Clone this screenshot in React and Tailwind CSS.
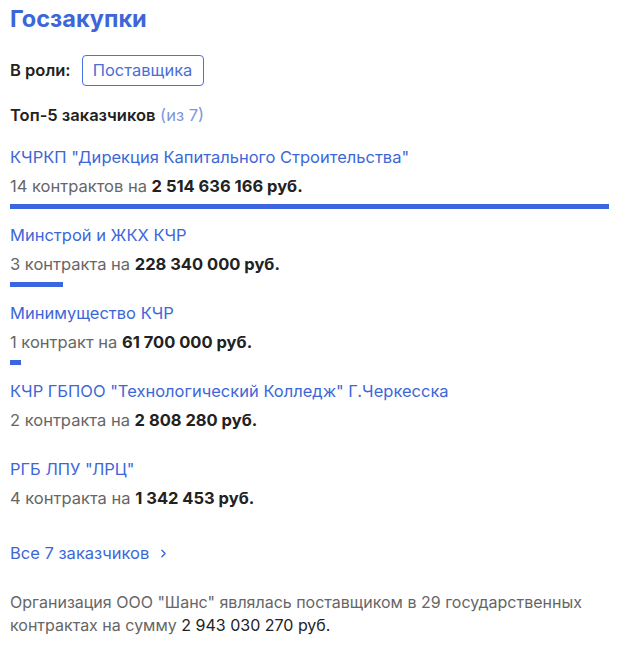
import { ChevronRight } from "lucide-react";

const customers = [
  { name: 'КЧРКП "Дирекция Капитального Строительства"', count: "14 контрактов", sum: "2 514 636 166 руб.", bar: "w-[599px]" },
  { name: "Минстрой и ЖКХ КЧР", count: "3 контракта", sum: "228 340 000 руб.", bar: "w-[53px]" },
  { name: "Минимущество КЧР", count: "1 контракт", sum: "61 700 000 руб.", bar: "w-[11px]" },
  { name: 'КЧР ГБПОО "Технологический Колледж" Г.Черкесска', count: "2 контракта", sum: "2 808 280 руб.", bar: "w-0" },
  { name: 'РГБ ЛПУ "ЛРЦ"', count: "4 контракта", sum: "1 342 453 руб.", bar: "w-0" },
];

export default function App() {
  return (
    <div className="w-[620px] h-[657px] bg-white px-[10px] pt-[4px] font-['Inter',sans-serif] text-[16.5px] text-[#222]">
      <h1 className="text-[23.5px] leading-[30px] font-bold text-[#3d67d9]">Госзакупки</h1>

      {/* Role */}
      <div className="mt-[21px] flex items-center gap-[11px]">
        <span className="font-semibold text-[#222]">В роли:</span>
        <span className="h-[31px] w-[122px] justify-center flex items-center border border-[#4a72e0] rounded-[4px] text-[#4a6fd8]">
          Поставщика
        </span>
      </div>

      <div className="mt-[18px] leading-[22px]">
        <span className="font-semibold">Топ-5 заказчиков</span>{" "}
        <span className="text-[#7f95d8]">(из 7)</span>
      </div>

      {/* Customers */}
      <div className="mt-[20px] flex flex-col">
        {customers.map((c) => (
          <div key={c.name} className="h-[78px]">
            <div className="leading-[22px] text-[#3d67d9]">{c.name}</div>
            <div className="mt-[7px] leading-[22px] text-[#666]">
              {c.count} на <span className="font-bold text-[#222]">{c.sum}</span>
            </div>
            <div className={`mt-[7px] h-[5px] bg-[#3b66e0] ${c.bar}`} />
          </div>
        ))}
      </div>

      <a className="mt-[6px] flex items-center gap-[8px] leading-[22px] text-[#3d67d9]">
        Все 7 заказчиков
        <ChevronRight className="w-[13px] h-[13px]" strokeWidth={2.5} />
      </a>

      <p className="mt-[27px] text-[16px] leading-[23px] text-[#666]">
        Организация ООО "Шанс" являлась поставщиком в 29 государственных
        <br />
        контрактах на сумму <span className="text-[#222]">2 943 030 270 руб.</span>
      </p>
    </div>
  );
}
